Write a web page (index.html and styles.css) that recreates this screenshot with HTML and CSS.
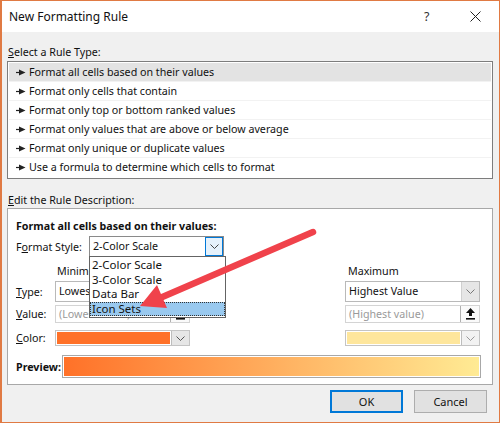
FILE: index.html
```html
<!DOCTYPE html>
<html lang="en">
<head>
<meta charset="UTF-8">
<title>New Formatting Rule</title>
<link rel="stylesheet" href="styles.css">
</head>
<body>
<div class="dialog">
    <div class="titlebar">
        <span class="title">New Formatting Rule</span>
        <span class="help">?</span>
        <span class="close">
            <svg width="11" height="11" viewBox="0 0 11 11"><path d="M0.5 0.5 L10.5 10.5 M10.5 0.5 L0.5 10.5" stroke="#222" stroke-width="1"/></svg>
        </span>
    </div>

    <div class="content">
        <div class="section-label"><u>S</u>elect a Rule Type:</div>
        <ul class="rule-list">
            <li class="selected"><svg class="bullet" width="10" height="7" viewBox="0 0 10 7"><path d="M0 3.5 H4" stroke="#222" stroke-width="1.2"/><polygon points="3,0.5 9.5,3.5 3,6.5" fill="#222"/></svg>Format all cells based on their values</li>
            <li><svg class="bullet" width="10" height="7" viewBox="0 0 10 7"><path d="M0 3.5 H4" stroke="#222" stroke-width="1.2"/><polygon points="3,0.5 9.5,3.5 3,6.5" fill="#222"/></svg>Format only cells that contain</li>
            <li><svg class="bullet" width="10" height="7" viewBox="0 0 10 7"><path d="M0 3.5 H4" stroke="#222" stroke-width="1.2"/><polygon points="3,0.5 9.5,3.5 3,6.5" fill="#222"/></svg>Format only top or bottom ranked values</li>
            <li><svg class="bullet" width="10" height="7" viewBox="0 0 10 7"><path d="M0 3.5 H4" stroke="#222" stroke-width="1.2"/><polygon points="3,0.5 9.5,3.5 3,6.5" fill="#222"/></svg>Format only values that are above or below average</li>
            <li><svg class="bullet" width="10" height="7" viewBox="0 0 10 7"><path d="M0 3.5 H4" stroke="#222" stroke-width="1.2"/><polygon points="3,0.5 9.5,3.5 3,6.5" fill="#222"/></svg>Format only unique or duplicate values</li>
            <li><svg class="bullet" width="10" height="7" viewBox="0 0 10 7"><path d="M0 3.5 H4" stroke="#222" stroke-width="1.2"/><polygon points="3,0.5 9.5,3.5 3,6.5" fill="#222"/></svg>Use a formula to determine which cells to format</li>
        </ul>

        <div class="section-label edit-label"><u>E</u>dit the Rule Description:</div>
        <div class="edit-box">
            <div class="edit-title">Format all cells based on their values:</div>

            <div class="style-row">
                <span class="style-label">F<u>o</u>rmat Style:</span>
                <div class="select style-select">
                    <span class="select-text">2-Color Scale</span>
                    <span class="drop-btn focused">
                        <svg width="9" height="5" viewBox="0 0 9 5"><polyline points="0.5,0.5 4.5,4.5 8.5,0.5" fill="none" stroke="#444" stroke-width="1"/></svg>
                    </span>
                    <ul class="popup">
                        <li>2-Color Scale</li>
                        <li>3-Color Scale</li>
                        <li>Data Bar</li>
                        <li class="hover">Icon Sets</li>
                    </ul>
                </div>
            </div>

            <div class="field-row heads">
                <span class="lbl"></span>
                <span class="col">Minimum</span>
                <span class="col max-col">Maximum</span>
            </div>

            <div class="field-row type-row">
                <span class="lbl"><u>T</u>ype:</span>
                <div class="select col">
                    <span class="select-text">Lowest Value</span>
                    <span class="drop-btn">
                        <svg width="9" height="5" viewBox="0 0 9 5"><polyline points="0.5,0.5 4.5,4.5 8.5,0.5" fill="none" stroke="#777" stroke-width="1"/></svg>
                    </span>
                </div>
                <div class="select col max-col">
                    <span class="select-text">Highest Value</span>
                    <span class="drop-btn">
                        <svg width="9" height="5" viewBox="0 0 9 5"><polyline points="0.5,0.5 4.5,4.5 8.5,0.5" fill="none" stroke="#777" stroke-width="1"/></svg>
                    </span>
                </div>
            </div>

            <div class="field-row value-row">
                <span class="lbl"><u>V</u>alue:</span>
                <div class="value-box col">
                    <span class="value-text">(Lowest value)</span>
                    <span class="ref-btn">
                        <svg width="9" height="12" viewBox="0 0 9 12"><polygon points="4.5,0 9,5 6,5 6,8 3,8 3,5 0,5" fill="#111"/><rect x="0" y="10" width="9" height="1.6" fill="#111"/></svg>
                    </span>
                </div>
                <div class="value-box col max-col">
                    <span class="value-text">(Highest value)</span>
                    <span class="ref-btn">
                        <svg width="9" height="12" viewBox="0 0 9 12"><polygon points="4.5,0 9,5 6,5 6,8 3,8 3,5 0,5" fill="#111"/><rect x="0" y="10" width="9" height="1.6" fill="#111"/></svg>
                    </span>
                </div>
            </div>

            <div class="field-row color-row">
                <span class="lbl"><u>C</u>olor:</span>
                <div class="color-box col">
                    <span class="swatch min-swatch"></span>
                    <span class="drop-btn">
                        <svg width="9" height="5" viewBox="0 0 9 5"><polyline points="0.5,0.5 4.5,4.5 8.5,0.5" fill="none" stroke="#555" stroke-width="1"/></svg>
                    </span>
                </div>
                <div class="color-box col max-col faded">
                    <span class="swatch max-swatch"></span>
                    <span class="drop-btn">
                        <svg width="9" height="5" viewBox="0 0 9 5"><polyline points="0.5,0.5 4.5,4.5 8.5,0.5" fill="none" stroke="#999" stroke-width="1"/></svg>
                    </span>
                </div>
            </div>

            <div class="preview-row">
                <span class="preview-label">Preview:</span>
                <div class="preview-bar"></div>
            </div>
        </div>

        <div class="buttons">
            <button class="btn default">OK</button>
            <button class="btn">Cancel</button>
        </div>
    </div>

    <!-- red annotation arrow -->
    <svg class="pointer" width="500" height="423" viewBox="0 0 500 423">
        <line x1="313" y1="232" x2="160" y2="298" stroke="#f0424b" stroke-width="6.5" stroke-linecap="round"/>
        <polygon points="140,306 157,285 167,308" fill="#f0424b"/>
    </svg>
</div>
</body>
</html>
```

FILE: styles.css
```css
* {
    box-sizing: border-box;
}
body {
    margin: 0;
    font-family: "Noto Sans", "Open Sans", sans-serif;
    font-size: 10.7px;
    color: #111;
}
.dialog {
    position: relative;
    width: 500px;
    height: 423px;
    border: 1px solid #e07a43;
    border-left-width: 2px;
    background-color: #f0f0f0;
}
.titlebar {
    height: 31px;
    background-color: #fff;
    display: flex;
    align-items: center;
    padding-left: 7px;
}
.title {
    flex: 1;
    font-size: 12px;
    color: #111;
}
.help {
    width: 20px;
    font-size: 12.5px;
    color: #333;
    margin-right: 26px;
}
.close {
    width: 20px;
    margin-right: 9px;
    display: flex;
    align-items: center;
}
.content {
    padding: 0 6px 0 5px;
}
.section-label {
    line-height: 16px;
    padding-top: 12px;
    padding-left: 1px;
    white-space: nowrap;
}
.edit-label {
    padding-top: 13px;
}
.rule-list {
    list-style: none;
    margin: 1px 0 0 0;
    padding: 1px;
    border: 1px solid #7d7d7d;
    box-shadow: inset 0 0 0 1px #fff;
    background-color: #fff;
}
.rule-list li {
    height: 19px;
    line-height: 19px;
    padding-left: 7px;
    display: flex;
    align-items: center;
    border-bottom: 1px solid #f2f2f2;
    white-space: nowrap;
}
.rule-list li:last-child {
    border-bottom: none;
}
.rule-list li.selected {
    background-color: #e3e3e3;
}
.bullet {
    margin-right: 3px;
    flex-shrink: 0;
}
.edit-box {
    border: 1px solid #a8a8a8;
    background-color: #fff;
    padding: 9px 8px 6px 8px;
}
.edit-title {
    font-weight: bold;
    line-height: 16px;
    white-space: nowrap;
}
.style-row {
    display: flex;
    align-items: center;
    margin-top: 2px;
    height: 21px;
}
.style-label {
    width: 73px;
    flex-shrink: 0;
    white-space: nowrap;
}
.select {
    position: relative;
    display: flex;
    flex-shrink: 0;
    height: 21px;
    border: 1px solid #b9b9b9;
    background-color: #fff;
}
.style-select {
    width: 135px;
    border-color: #8a8a8a;
}
.select-text {
    flex: 1;
    padding-left: 3px;
    line-height: 19px;
    white-space: nowrap;
    overflow: hidden;
}
.drop-btn {
    width: 18px;
    flex-shrink: 0;
    display: flex;
    align-items: center;
    justify-content: center;
    background-color: #e6e6e6;
    border-left: 1px solid #d0d0d0;
}
.drop-btn.focused {
    background-color: #e5f1fb;
    border: 1px solid #0078d7;
}
.popup {
    position: absolute;
    top: 19px;
    left: -1px;
    width: 137px;
    list-style: none;
    margin: 0;
    padding: 1px 0;
    border: 1px solid #646464;
    background-color: #fff;
    z-index: 2;
}
.popup li {
    height: 14.5px;
    line-height: 14.5px;
    padding-left: 2px;
    font-size: 11.5px;
}
.popup li.hover {
    background-color: #99c9ef;
    border: 1px dotted #333;
    padding-left: 1px;
    line-height: 12.5px;
}
.field-row {
    display: flex;
    align-items: center;
}
.lbl {
    width: 39px;
    flex-shrink: 0;
    white-space: nowrap;
}
.col {
    width: 135px;
    flex-shrink: 0;
}
.max-col {
    margin-left: 155px;
}
.heads {
    margin-top: 6px;
    height: 16px;
    line-height: 16px;
    padding-left: 2px;
}
.heads .max-col {
    margin-left: 156px;
}
.type-row {
    margin-top: 2px;
    height: 21px;
}
.value-row {
    margin-top: 3px;
    height: 18px;
}
.value-box {
    display: flex;
    height: 18px;
    border: 1px solid #d4d4d4;
}
.value-text {
    flex: 1;
    padding-left: 3px;
    line-height: 16px;
    color: #9a9a9a;
    white-space: nowrap;
    overflow: hidden;
}
.ref-btn {
    width: 19px;
    flex-shrink: 0;
    display: flex;
    align-items: center;
    justify-content: center;
    border-left: 1px solid #b0b0b0;
    background-color: #fafafa;
}
.color-row {
    margin-top: 7px;
    height: 16px;
}
.color-box {
    display: flex;
    height: 16px;
    border: 1px solid #c4c4c4;
}
.swatch {
    flex: 1;
    border: 1px solid #fff;
}
.min-swatch {
    background-color: #ff7128;
}
.max-swatch {
    background-color: #fee69c;
}
.color-box .drop-btn {
    border-left: 1px solid #bdbdbd;
}
.faded .drop-btn {
    background-color: #f2f2f2;
}
.preview-row {
    display: flex;
    align-items: center;
    margin-top: 9px;
    height: 23px;
}
.preview-label {
    width: 46px;
    flex-shrink: 0;
    font-weight: bold;
    white-space: nowrap;
}
.preview-bar {
    width: 419px;
    flex-shrink: 0;
    height: 23px;
    border: 1px solid #a8a8a8;
    box-shadow: inset 0 0 0 1px #fff;
    background: linear-gradient(to right, #ff7128, #ffeb94);
}
.buttons {
    display: flex;
    justify-content: flex-end;
    gap: 11px;
    margin-top: 5px;
    margin-right: 6px;
}
.btn {
    width: 73px;
    height: 23px;
    font-family: inherit;
    font-size: 11px;
    color: #111;
    background-color: #e1e1e1;
    border: 1px solid #adadad;
}
.btn.default {
    border: 2px solid #0078d7;
}
.pointer {
    position: absolute;
    top: -1px;
    left: -2px;
    pointer-events: none;
    z-index: 5;
}
```
